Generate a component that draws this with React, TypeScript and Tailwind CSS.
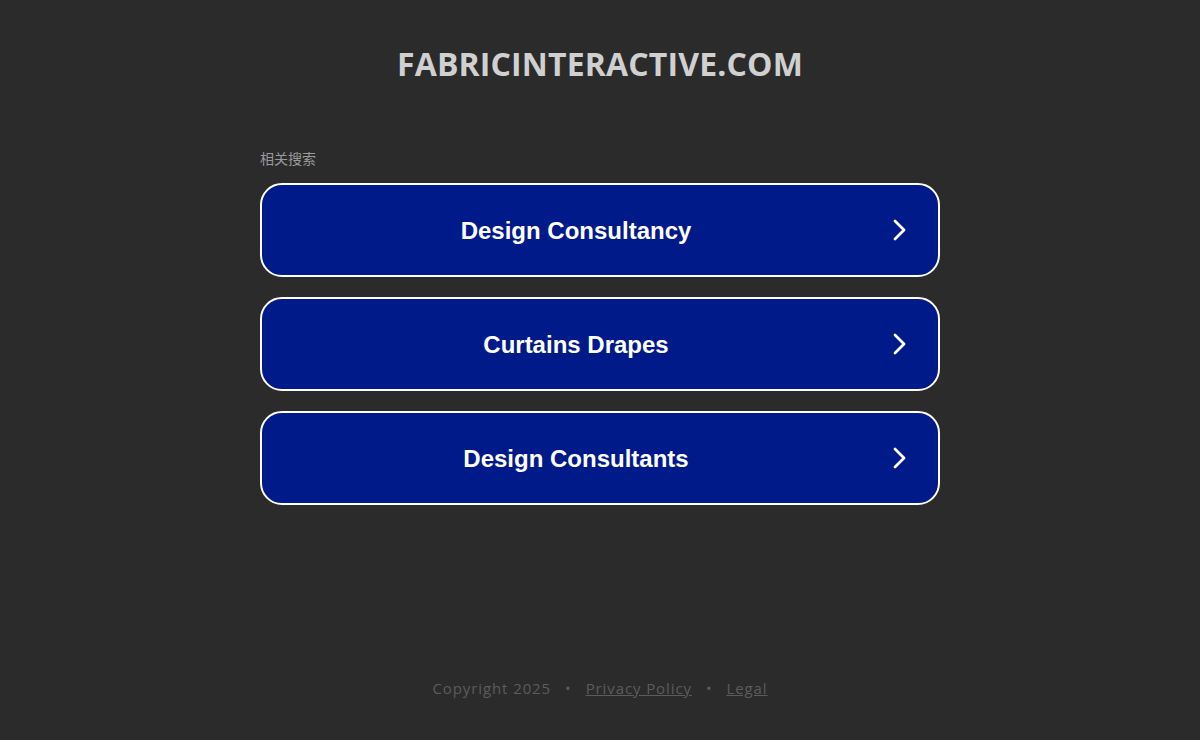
import React from "react";

const items = ["Design Consultancy", "Curtains Drapes", "Design Consultants"];

function Chevron() {
  return (
    <svg width="16" height="22" viewBox="0 0 16 22" fill="none">
      <polyline points="3,2 12,11 3,20" stroke="white" strokeWidth="2.8" strokeLinecap="round" strokeLinejoin="round" />
    </svg>
  );
}

export default function App() {
  return (
    <div className="w-[1200px] h-[740px] bg-[#2b2b2b] flex flex-col items-center" style={{ fontFamily: "'Open Sans', sans-serif" }}>
      <h1 className="mt-[43px] text-[32px] leading-[42px] font-bold text-[#d0d0d0] tracking-[0.15px]" style={{ fontFamily: "'Open Sans', sans-serif" }}>
        FABRICINTERACTIVE.COM
      </h1>
      <div className="w-[680px] mt-[65px]">
        <div className="text-[14px] leading-[18px] text-[#9a9a9a]" style={{ fontFamily: "'Liberation Sans', 'Noto Sans CJK SC', sans-serif" }}>相关搜索</div>
        <div className="mt-[15px] flex flex-col gap-[20px]">
          {items.map((t) => (
            <div key={t} className="h-[94px] rounded-[22px] border-2 border-white bg-[#011a8a] flex items-center pl-[18px] pr-[30px]">
              <div className="flex-1 pt-[2px] text-center text-white font-bold text-[24px]" style={{ fontFamily: "'Liberation Sans', Arial, sans-serif" }}>
                {t}
              </div>
              <div className="w-[36px] flex justify-end">
                <Chevron />
              </div>
            </div>
          ))}
        </div>
      </div>
      <div className="mt-auto mb-[41px] flex items-center text-[15px] text-[#5c5c5c] tracking-[0.9px]">
        <span>Copyright 2025</span>
        <span className="mx-[14px]">•</span>
        <span className="underline">Privacy Policy</span>
        <span className="mx-[14px]">•</span>
        <span className="underline">Legal</span>
      </div>
    </div>
  );
}
